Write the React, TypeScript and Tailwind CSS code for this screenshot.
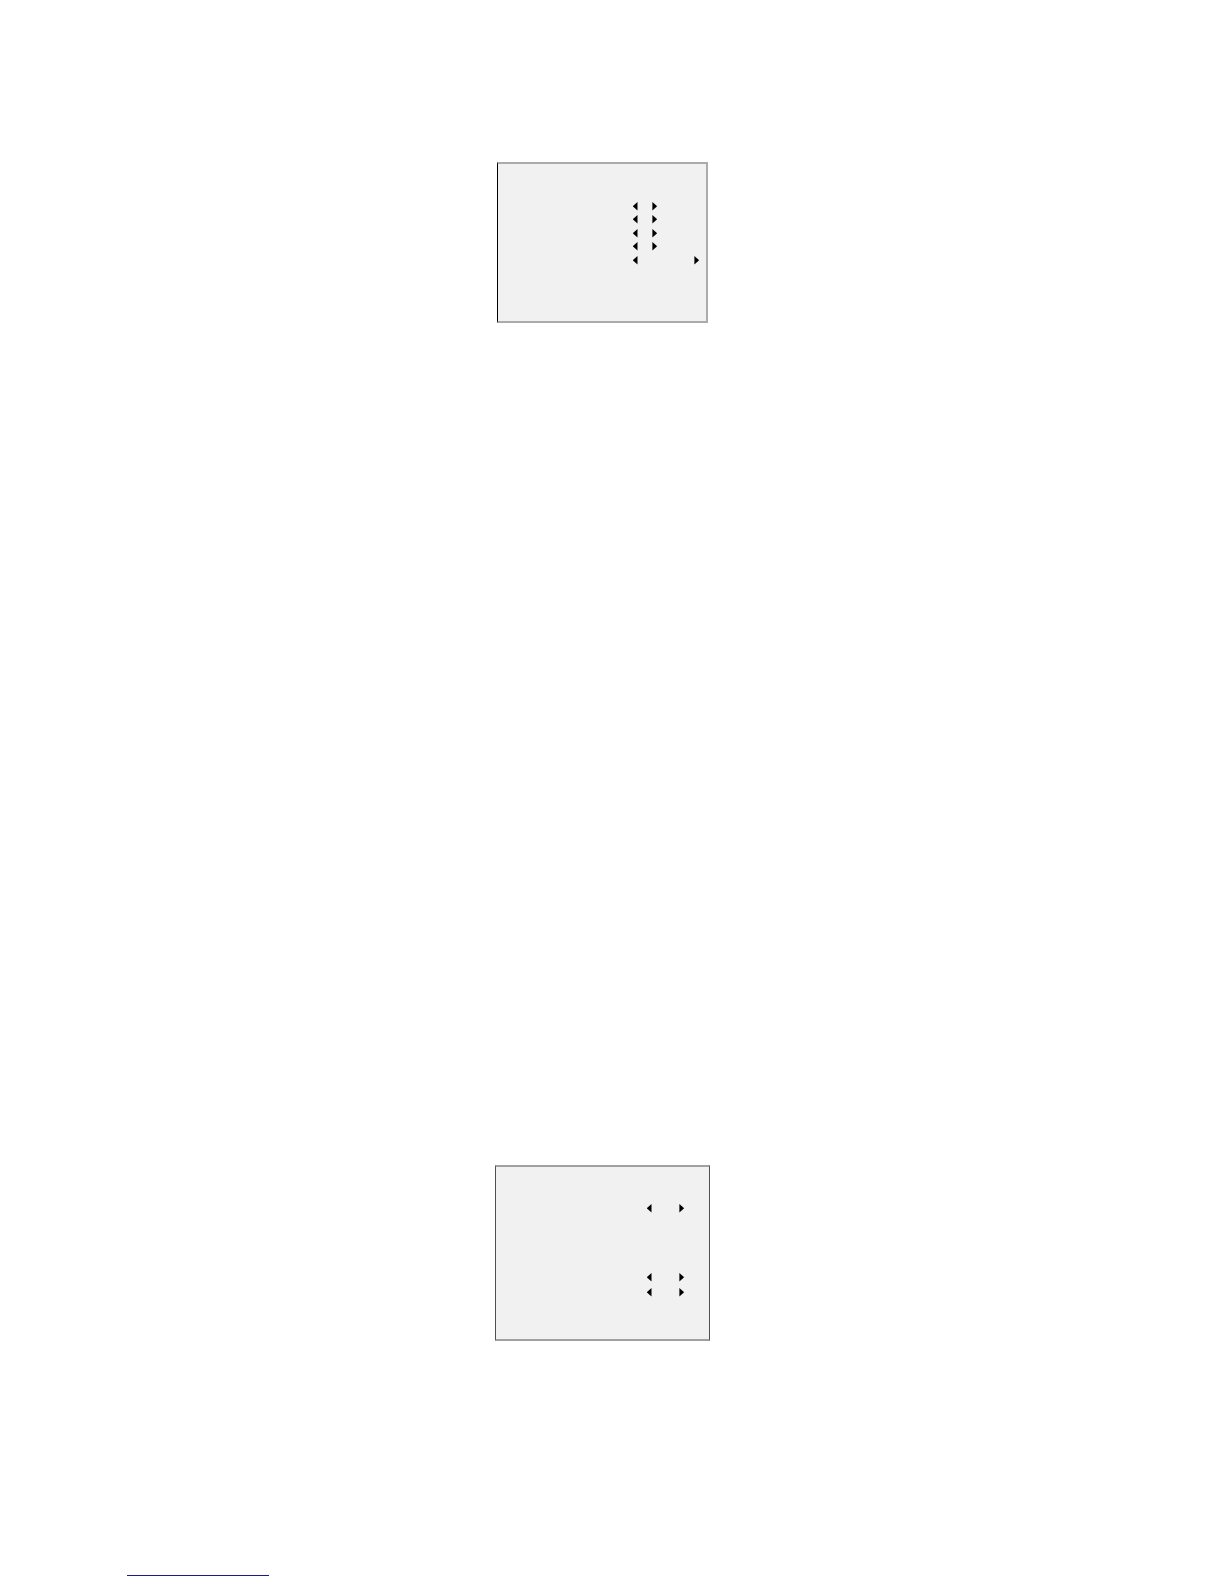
type ArrowProps = { direction: "left" | "right"; label: string };

function Arrow({ direction, label }: ArrowProps) {
  return (
    <button type="button" aria-label={label} className="block h-[9px] w-[5px]">
      <svg viewBox="0 0 5 9" className="block h-[9px] w-[5px] fill-black" aria-hidden="true">
        <path d={direction === "left" ? "M4.5 0V8.6L0 4.6V4Z" : "M0.4 0V8.6L4.9 4.6V4Z"} />
      </svg>
    </button>
  );
}

type StepperProps = { name: string; row: string; width: string };

function Stepper({ name, row, width }: StepperProps) {
  return (
    <div role="group" aria-label={name} className={`flex items-start ${row}`}>
      <div className={`flex justify-between ${width}`}>
        <Arrow direction="left" label={`${name}: previous`} />
        <Arrow direction="right" label={`${name}: next`} />
      </div>
    </div>
  );
}

const firstMenu: StepperProps[] = [
  { name: "Option 1", row: "h-[13px]", width: "w-6" },
  { name: "Option 2", row: "h-[14px]", width: "w-6" },
  { name: "Option 3", row: "h-[13px]", width: "w-6" },
  { name: "Option 4", row: "h-[14px]", width: "w-6" },
  { name: "Option 5", row: "h-[14px]", width: "w-[66px]" },
];

const secondMenu: StepperProps[] = [
  { name: "Option 1", row: "h-[69px]", width: "w-[37px]" },
  { name: "Option 2", row: "h-[15px]", width: "w-[37px]" },
  { name: "Option 3", row: "h-[15px]", width: "w-[37px]" },
];

export default function App() {
  return (
    <div className="min-h-screen bg-white">
      <main className="flex flex-col items-center pt-[162px] pr-[19px]">
        <section
          aria-label="First menu"
          className="w-[211px] border-2 border-l border-[#ababab] border-l-black bg-[#f1f1f1] pt-[38px] pb-[51px] pl-[135px]"
        >
          {firstMenu.map((item) => (
            <Stepper key={item.name} {...item} />
          ))}
        </section>
        <section
          aria-label="Second menu"
          className="mt-[842px] w-[215px] border-x border-y-2 border-x-[#505050] border-y-[#a0a0a0] bg-[#f1f1f1] pt-[37px] pb-[36px] pl-[151px]"
        >
          {secondMenu.map((item) => (
            <Stepper key={item.name} {...item} />
          ))}
        </section>
      </main>
      <footer className="flex pt-[219px] pb-2 pl-[127px]">
        <a href="#" aria-label="Website" className="block h-4 w-[142px] border-b border-[#1a1a8c]" />
      </footer>
    </div>
  );
}
